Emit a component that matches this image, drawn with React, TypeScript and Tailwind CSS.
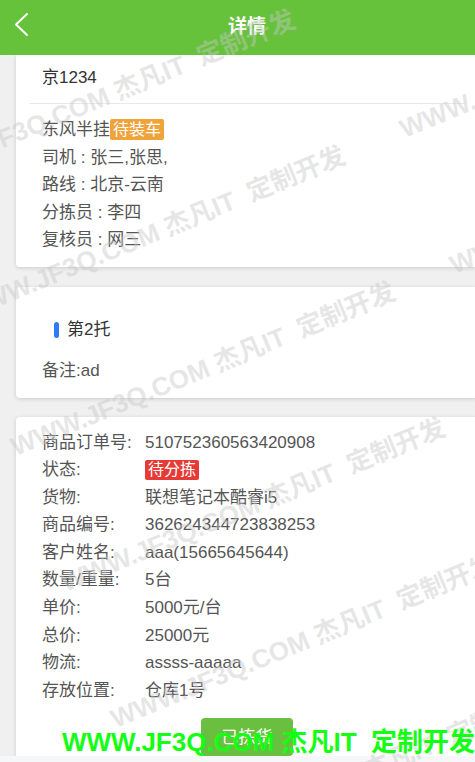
import React from "react";

const FONT = { fontFamily: '"Liberation Sans", "Noto Sans CJK SC", sans-serif' };

const wmPositions = [
  "left-[103px] top-[97px]",
  "left-[153px] top-[233px]",
  "left-[203px] top-[369px]",
  "left-[253px] top-[505px]",
  "left-[303px] top-[641px]",
  "left-[353px] top-[777px]",
  "left-[542px] top-[-85px]",
  "left-[592px] top-[51px]",
  "left-[642px] top-[187px]",
  "left-[692px] top-[323px]",
];

const rows: [string, React.ReactNode][] = [
  ["商品订单号:", "510752360563420908"],
  [
    "状态:",
    <span className="inline-block bg-[#e53a35] text-white text-[16px] leading-[20px] px-[3px] rounded-[2px]">待分拣</span>,
  ],
  ["货物:", "联想笔记本酷睿i5"],
  ["商品编号:", "362624344723838253"],
  ["客户姓名:", "aaa(15665645644)"],
  ["数量/重量:", "5台"],
  ["单价:", "5000元/台"],
  ["总价:", "25000元"],
  ["物流:", "assss-aaaaa"],
  ["存放位置:", "仓库1号"],
];

export default function App() {
  return (
    <div className="relative w-[475px] h-[762px] overflow-hidden bg-[#f0f0f0]" style={FONT}>
      <div className="w-[494px]">
        {/* Header */}
        <div className="relative h-[55px] bg-[#66c23a] flex items-center justify-center">
          <svg className="absolute left-[12px] top-[11px]" width="20" height="28" viewBox="0 0 20 28">
            <polyline points="15,3 4,13.5 15,24" fill="none" stroke="white" strokeWidth="2" strokeLinecap="round" strokeLinejoin="round" />
          </svg>
          <span className="text-white text-[19px] font-bold">详情</span>
        </div>

        {/* Card 1 */}
        <div className="mx-4 bg-white rounded-b-[4px] shadow-[0_1px_4px_rgba(0,0,0,0.16)] px-[13px] pb-[13px]">
          <div className="h-[49px] pb-[3px] flex items-center pl-[13px] border-b border-[#e8e8ef] text-[17px] text-[#333]">
            京1234
          </div>
          <div className="pl-[13px] pt-[12px] text-[17px] leading-[27.5px] text-[#555]">
            <div className="flex items-center">
              <span>东风半挂</span>
              <span className="inline-block bg-[#f0a23b] text-white text-[16px] leading-[21px] px-[3px] rounded-[2px]">待装车</span>
            </div>
            <div>司机 : 张三,张思,</div>
            <div>路线 : 北京-云南</div>
            <div>分拣员 : 李四</div>
            <div>复核员 : 网三</div>
          </div>
        </div>

        {/* Card 2 */}
        <div className="mx-4 mt-5 bg-white rounded-[4px] shadow-[0_1px_4px_rgba(0,0,0,0.16)] pt-[31px] pb-[15px]">
          <div className="pl-[38px] flex items-center gap-[8px] h-[24px]">
            <span className="w-[5px] h-[16px] rounded-full bg-[#2b7cf6]" />
            <span className="text-[17px] text-[#333]">第2托</span>
          </div>
          <div className="pl-[26px] mt-[17px] h-[24px] leading-[24px] text-[17px] text-[#555]">备注:ad</div>
        </div>

        {/* Card 3 */}
        <div className="mx-4 mt-[19px] bg-white rounded-t-[4px] shadow-[0_1px_4px_rgba(0,0,0,0.16)] pt-[12px] pl-[26px]">
          <div className="text-[17px] leading-[27.6px] text-[#555]">
            {rows.map(([k, v], i) => (
              <div key={i} className="flex items-center h-[27.6px]">
                <span className="w-[103px] shrink-0">{k}</span>
                <span>{v}</span>
              </div>
            ))}
          </div>
          <div className="flex justify-center pr-[26px] mt-[14px]">
            <button className="w-[92px] h-[38px] bg-[#6abf40] text-white text-[17px] rounded-[4px]">已拣货</button>
          </div>
        </div>
        <div className="h-[10px] bg-[#f6f7f9]" />
      </div>

      {/* Watermark */}
      <div className="absolute inset-0 pointer-events-none">
        {wmPositions.map((p, i) => (
          <div
            key={i}
            className={
              "absolute whitespace-pre text-[26px] font-bold leading-none text-[rgba(200,200,200,0.45)] -translate-x-1/2 -translate-y-1/2 -rotate-[22.5deg] " +
              p
            }
          >
            WWW.JF3Q.COM 杰凡IT  定制开发
          </div>
        ))}
      </div>

      <div className="absolute left-[62px] top-[727px] whitespace-pre text-[26px] leading-[30px] font-bold text-[#14ff14] pointer-events-none">
        WWW.JF3Q.COM 杰凡IT  定制开发
      </div>
    </div>
  );
}
